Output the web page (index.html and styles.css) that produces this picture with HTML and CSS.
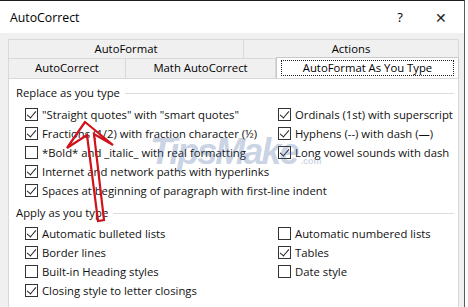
FILE: index.html
```html
<!DOCTYPE html>
<html lang="en">
<head>
    <meta charset="UTF-8">
    <title>AutoCorrect</title>
    <link rel="stylesheet" href="styles.css">
</head>
<body>
    <div class="window">
        <div class="titlebar">
            <span class="title">AutoCorrect</span>
            <span class="help">?</span>
            <span class="close">&#x2715;</span>
        </div>

        <div class="dialog">
            <div class="tabs">
                <div class="tab-row">
                    <div class="tab tab-af">AutoFormat</div>
                    <div class="tab tab-actions">Actions</div>
                </div>
                <div class="tab-row">
                    <div class="tab tab-ac">AutoCorrect</div>
                    <div class="tab tab-math">Math AutoCorrect</div>
                    <div class="tab tab-active"><span class="focus">AutoFormat As You Type</span></div>
                </div>
            </div>

            <div class="panel">
                <div class="legend">Replace as you type</div>
                <div class="grid replace">
                    <label class="opt"><span class="box on"></span>"Straight quotes" with "smart quotes"</label>
                    <label class="opt"><span class="box on"></span>Ordinals (1st) with superscript</label>
                    <label class="opt"><span class="box on"></span>Fractions (1/2) with fraction character (½)</label>
                    <label class="opt"><span class="box on"></span>Hyphens (--) with dash (—)</label>
                    <label class="opt"><span class="box"></span>*Bold* and _italic_ with real formatting</label>
                    <label class="opt"><span class="box on"></span>Long vowel sounds with dash</label>
                    <label class="opt wide"><span class="box on"></span>Internet and network paths with hyperlinks</label>
                    <label class="opt wide"><span class="box on"></span>Spaces at beginning of paragraph with first-line indent</label>
                </div>

                <div class="legend">Apply as you type</div>
                <div class="grid apply">
                    <label class="opt"><span class="box on"></span>Automatic bulleted lists</label>
                    <label class="opt"><span class="box"></span>Automatic numbered lists</label>
                    <label class="opt"><span class="box on"></span>Border lines</label>
                    <label class="opt"><span class="box on"></span>Tables</label>
                    <label class="opt"><span class="box"></span>Built-in Heading styles</label>
                    <label class="opt"><span class="box"></span>Date style</label>
                    <label class="opt wide"><span class="box on"></span>Closing style to letter closings</label>
                </div>
            </div>
        </div>
    </div>

    <!-- watermark + red arrow drawn over the screenshot -->
    <div class="watermark">TipsMake<span class="dotcom">.com</span></div>
    <svg class="arrow" width="60" height="110" viewBox="60 115 60 110">
        <path d="M85 122 L67 148 L87 135 L98 221 L104 220 L94 134 L113 145 Z"
              fill="none" stroke="#d0131b" stroke-width="2.2" stroke-linejoin="miter"/>
    </svg>
</body>
</html>
```

FILE: styles.css
```css
/* AutoCorrect dialog */
body {
    margin: 0;
    width: 468px;
    height: 307px;
    overflow: hidden;
    background: #ffffff;
    font-family: 'Open Sans', 'Noto Sans', sans-serif;
    font-size: 11.3px;
    color: #000;
    position: relative;
}

.window {
    width: 465px;
    height: 307px;
    border-top: 1px solid #1f1f1f;
    border-right: 1px solid #5a5a5a;
    background: #f0f0f0;
    box-sizing: border-box;
}

.titlebar {
    height: 32px;
    background: #ffffff;
    display: flex;
    align-items: center;
    font-size: 12.3px;
}

.title {
    padding-left: 10px;
    flex: 1;
}

.help {
    width: 20px;
    margin-right: 21px;
    text-align: center;
    font-size: 13px;
}

.close {
    width: 20px;
    margin-right: 13px;
    text-align: center;
    font-size: 14px;
    color: #222;
}

.dialog {
    padding: 6px 0 0 8px;
}

.tabs {
    width: 451px;
}

.tab-row {
    display: flex;
}

.tab {
    height: 19px;
    line-height: 18px;
    text-align: center;
    border: 1px solid #d9d9d9;
    border-bottom: none;
    box-sizing: border-box;
    background: #f0f0f0;
}

.tab-row + .tab-row .tab {
    height: 20px;
}

.tab-af { width: 236px; }
.tab-actions { width: 215px; border-left: none; border-top-right-radius: 2px; }
.tab-ac { width: 118px; }
.tab-math { width: 150px; border-left: none; }

.tab-active {
    width: 183px;
    background: #ffffff;
    border-color: #c8c8c8;
    margin-top: -1px;
    height: 21px !important;
    padding: 2px 4px 0;
}

.focus {
    display: block;
    height: 14px;
    line-height: 13px;
    border: 1px dotted #222;
}

.panel {
    width: 451px;
    height: 240px;
    background: #ffffff;
    border: 1px solid #d9d9d9;
    box-sizing: border-box;
    padding: 6px 4px 0 7px;
}

.legend {
    display: flex;
    align-items: center;
    height: 16px;
    line-height: 16px;
    color: #111;
}

.legend::after {
    content: "";
    flex: 1;
    height: 1px;
    background: #dcdcdc;
    margin-left: 5px;
}

.grid {
    display: grid;
    grid-template-columns: 253px 1fr;
    grid-auto-rows: 19px;
    padding-left: 9px;
}

.replace {
    margin: 4px 0 5px;
}

.apply {
    margin-top: 3px;
}

.opt {
    display: flex;
    align-items: center;
    white-space: nowrap;
    color: #111;
}

.opt.wide {
    grid-column: 1 / 3;
}

.box {
    width: 13px;
    height: 13px;
    border: 1px solid #333;
    box-sizing: border-box;
    margin-right: 4px;
    flex: none;
    position: relative;
    background: #fff;
}

.box.on::after {
    content: "";
    position: absolute;
    left: 3px;
    top: 0px;
    width: 4px;
    height: 8px;
    border-right: 1px solid #222;
    border-bottom: 1px solid #222;
    transform: rotate(40deg);
    transform-origin: 50% 50%;
}

.watermark {
    position: absolute;
    left: 150px;
    top: 131px;
    font-family: 'Liberation Sans', sans-serif;
    font-weight: bold;
    font-style: italic;
    font-size: 36px;
    letter-spacing: -2px;
    color: rgba(70, 105, 160, 0.3);
    pointer-events: none;
}

.dotcom {
    font-size: 9px;
    letter-spacing: 0;
    font-style: normal;
    margin-left: 3px;
}

.arrow {
    position: absolute;
    left: 60px;
    top: 115px;
}
```
